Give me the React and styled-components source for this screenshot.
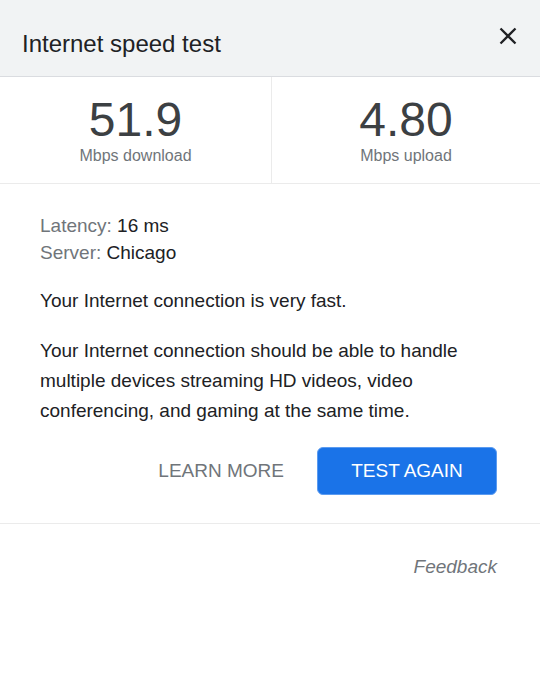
import React from "react";
import styled, { createGlobalStyle } from "styled-components";

const GlobalStyle = createGlobalStyle`
  html, body {
    margin: 0;
    padding: 0;
    background: #ffffff;
  }
  body {
    font-family: "Liberation Sans", Arial, sans-serif;
    color: #202124;
  }
  * { box-sizing: border-box; }
`;

const Panel = styled.div`
  width: 540px;
  display: flex;
  flex-direction: column;
`;

const Header = styled.header`
  height: 77px;
  background: #f1f3f4;
  border-bottom: 1px solid #dadce0;
  display: flex;
  justify-content: space-between;
  align-items: flex-start;
  padding: 0 12px 0 22px;
`;

const Title = styled.h1`
  margin: 30px 0 0;
  font-size: 24px;
  line-height: 28px;
  font-weight: 400;
  color: #202124;
`;

const CloseButton = styled.button`
  width: 40px;
  height: 40px;
  margin-top: 16px;
  padding: 0;
  border: none;
  background: transparent;
  display: flex;
  align-items: center;
  justify-content: center;
  cursor: pointer;
`;

const Stats = styled.section`
  display: grid;
  grid-template-columns: 272px 1fr;
  border-bottom: 1px solid #ebebeb;
`;

const Stat = styled.div`
  display: flex;
  flex-direction: column;
  align-items: center;
  padding: 19px 0 17px;
  border-right: ${(p) => (p.$divider ? "1px solid #ebebeb" : "none")};
`;

const Value = styled.div`
  font-size: 48px;
  line-height: 48px;
  color: #3c4043;
`;

const Unit = styled.div`
  margin-top: 2px;
  font-size: 16px;
  line-height: 20px;
  color: #70757a;
`;

const Body = styled.section`
  padding: 28px 43px 28px 40px;
  border-bottom: 1px solid #ebebeb;
  display: flex;
  flex-direction: column;
`;

const InfoLine = styled.div`
  font-size: 19px;
  line-height: 27px;
  color: #202124;
`;

const InfoLabel = styled.span`
  color: #70757a;
`;

const Paragraph = styled.p`
  margin: 20px 0 0;
  font-size: 19px;
  line-height: 30px;
  color: #202124;
`;

const Actions = styled.div`
  margin-top: 21px;
  display: flex;
  justify-content: flex-end;
  align-items: center;
  gap: 33px;
`;

const TextButton = styled.button`
  border: none;
  background: transparent;
  padding: 0;
  font-family: inherit;
  font-size: 19px;
  line-height: 48px;
  color: #70757a;
  text-transform: uppercase;
  cursor: pointer;
`;

const PrimaryButton = styled.button`
  width: 180px;
  height: 48px;
  border: 1px solid #5b9bf0;
  border-radius: 6px;
  background: #1a73e8;
  color: #ffffff;
  font-family: inherit;
  font-size: 19px;
  text-transform: uppercase;
  cursor: pointer;
  padding: 0;
`;

const Footer = styled.footer`
  padding: 31px 43px 0 40px;
  display: flex;
  justify-content: flex-end;
`;

const FeedbackLink = styled.a`
  font-size: 19px;
  line-height: 24px;
  font-style: italic;
  color: #70757a;
  text-decoration: none;
`;

const CloseIcon = () => (
  <svg width="20" height="20" viewBox="0 0 20 20" aria-hidden="true">
    <path d="M2.5 2.5 L17.5 17.5 M17.5 2.5 L2.5 17.5" stroke="#202124" strokeWidth="2.3" strokeLinecap="butt" fill="none" />
  </svg>
);

export default function App() {
  return (
    <>
      <GlobalStyle />
      <Panel>
        <Header>
          <Title>Internet speed test</Title>
          <CloseButton aria-label="Close">
            <CloseIcon />
          </CloseButton>
        </Header>
        <Stats>
          <Stat $divider>
            <Value>51.9</Value>
            <Unit>Mbps download</Unit>
          </Stat>
          <Stat>
            <Value>4.80</Value>
            <Unit>Mbps upload</Unit>
          </Stat>
        </Stats>
        <Body>
          <InfoLine>
            <InfoLabel>Latency:</InfoLabel> 16 ms
          </InfoLine>
          <InfoLine>
            <InfoLabel>Server:</InfoLabel> Chicago
          </InfoLine>
          <Paragraph>Your Internet connection is very fast.</Paragraph>
          <Paragraph>
            Your Internet connection should be able to handle multiple devices streaming HD videos, video conferencing, and gaming at the same time.
          </Paragraph>
          <Actions>
            <TextButton>Learn more</TextButton>
            <PrimaryButton>Test again</PrimaryButton>
          </Actions>
        </Body>
        <Footer>
          <FeedbackLink href="#">Feedback</FeedbackLink>
        </Footer>
      </Panel>
    </>
  );
}
